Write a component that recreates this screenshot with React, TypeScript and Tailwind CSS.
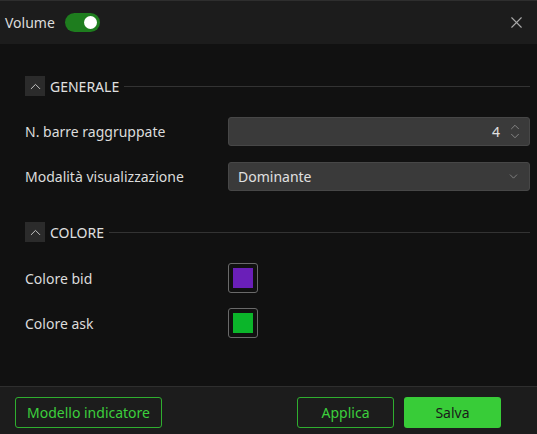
import * as React from "react";
import { ChevronUp, ChevronDown, X } from "lucide-react";

function SectionHeader({ title }: { title: string }) {
  return (
    <div className="flex items-center h-5">
      <div className="flex h-5 w-5 items-center justify-center bg-[#2b2b2b] text-[#c4c4c4]">
        <ChevronUp size={17} strokeWidth={1.4} />
      </div>
      <span className="ml-[5px] text-[14px] text-[#e0e0e0]">{title}</span>
      <div className="ml-[5px] h-px flex-1 bg-[#333333]" />
    </div>
  );
}

function Row({ label, children }: { label: string; children: React.ReactNode }) {
  return (
    <div className="flex items-center">
      <span className="w-[203px] text-[14px] text-[#dcdcdc]">{label}</span>
      {children}
    </div>
  );
}

function Swatch({ color }: { color: string }) {
  return (
    <div className="flex h-[30px] w-[30px] items-center justify-center rounded-[3px] border border-[#6a6a6a] bg-[#111111]">
      <div className="h-5 w-5" style={{ backgroundColor: color }} />
    </div>
  );
}

export default function App() {
  const [on, setOn] = React.useState(true);

  return (
    <div
      className="flex h-[434px] w-[537px] flex-col bg-[#111111]"
      style={{ fontFamily: '"Noto Sans", "Open Sans", sans-serif' }}
    >
      {/* Header */}
      <header className="flex h-[44px] shrink-0 items-center border-t border-[#2e2e2e] bg-[#1c1c1c] pl-[5px] pr-[11px]">
        <span className="text-[14px] text-[#dcdcdc]">Volume</span>
        <button
          onClick={() => setOn(!on)}
          className="ml-[10px] flex h-[19px] w-[35px] items-center justify-end rounded-full bg-[#1e7d1e] px-[3px]"
        >
          <span className="h-[13px] w-[13px] rounded-full bg-white" />
        </button>
        <X size={19} strokeWidth={1.4} className="ml-auto text-[#a8a8a8]" />
      </header>

      {/* Body */}
      <main className="flex flex-1 flex-col px-[25px] pt-[32px] pr-[7px]">
        <SectionHeader title="GENERALE" />

        <div className="mt-[21px]">
          <Row label="N. barre raggruppate">
            <div className="flex h-[29px] flex-1 items-center justify-end rounded-[3px] border border-[#474747] bg-[#3a3a3a] pr-[7px]">
              <span className="text-[14px] text-[#e0e0e0]">4</span>
              <div className="ml-[8px] flex flex-col items-center text-[#9a9a9a]">
                <ChevronUp size={14} strokeWidth={1.3} className="-mb-[5px]" />
                <ChevronDown size={14} strokeWidth={1.3} />
              </div>
            </div>
          </Row>
        </div>

        <div className="mt-[16px]">
          <Row label="Modalità visualizzazione">
            <div className="flex h-[29px] flex-1 items-center rounded-[3px] border border-[#474747] bg-[#3a3a3a] pl-[9px] pr-[9px]">
              <span className="text-[14px] text-[#e0e0e0]">Dominante</span>
              <ChevronDown size={13} strokeWidth={1.3} className="ml-auto text-[#9a9a9a]" />
            </div>
          </Row>
        </div>

        <div className="mt-[31px]">
          <SectionHeader title="COLORE" />
        </div>

        <div className="mt-[21px]">
          <Row label="Colore bid">
            <Swatch color="#6a1fb8" />
          </Row>
        </div>

        <div className="mt-[15px]">
          <Row label="Colore ask">
            <Swatch color="#0bb52a" />
          </Row>
        </div>
      </main>

      {/* Footer */}
      <footer className="flex h-[48px] shrink-0 items-start border-t border-[#2e2e2e] bg-[#1c1c1c] px-[15px] pt-[10px]">
        <button className="h-[31px] w-[147px] rounded-[3px] border border-[#2fae2f] text-[14px] text-[#3ccf3c]">
          Modello indicatore
        </button>
        <button className="ml-auto h-[31px] w-[97px] rounded-[3px] border border-[#2fae2f] text-[14px] text-[#3ccf3c]">
          Applica
        </button>
        <button className="ml-[10px] mr-[21px] h-[31px] w-[97px] rounded-[3px] bg-[#38cc38] text-[14px] text-[#1a1a1a]">
          Salva
        </button>
      </footer>
    </div>
  );
}
